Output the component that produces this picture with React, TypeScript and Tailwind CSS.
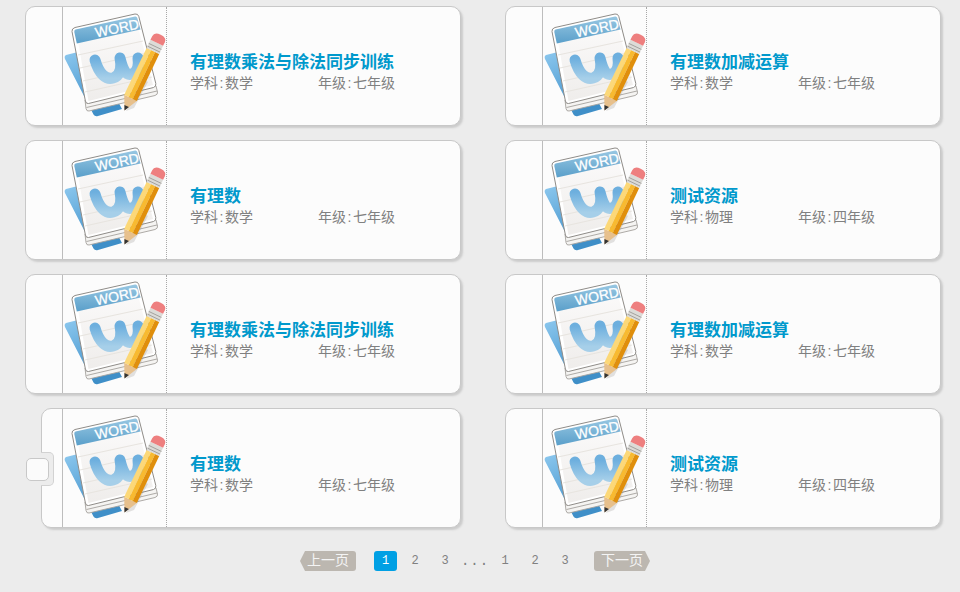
import React from 'react'

interface Resource {
  title: string
  subject: string
  grade: string
}

const resources: Resource[] = [
  { title: '有理数乘法与除法同步训练', subject: '数学', grade: '七年级' },
  { title: '有理数加减运算', subject: '数学', grade: '七年级' },
  { title: '有理数', subject: '数学', grade: '七年级' },
  { title: '测试资源', subject: '物理', grade: '四年级' },
  { title: '有理数乘法与除法同步训练', subject: '数学', grade: '七年级' },
  { title: '有理数加减运算', subject: '数学', grade: '七年级' },
  { title: '有理数', subject: '数学', grade: '七年级' },
  { title: '测试资源', subject: '物理', grade: '四年级' },
]

const WordIcon = () => (
  <svg width="103" height="112" viewBox="3 0 103 112" className="block overflow-visible">
    <defs>
      <linearGradient id="backSheet" x1="0" y1="0" x2="0.4" y2="1">
        <stop offset="0" stopColor="#8fcaf0" />
        <stop offset="1" stopColor="#3f8fc8" />
      </linearGradient>
      <linearGradient id="band" x1="0" y1="0" x2="0" y2="1">
        <stop offset="0" stopColor="#98c7e2" />
        <stop offset="1" stopColor="#5a9fca" />
      </linearGradient>
      <linearGradient id="sheet" x1="0" y1="0" x2="0" y2="1">
        <stop offset="0" stopColor="#fcfbfb" />
        <stop offset="1" stopColor="#efedeb" />
      </linearGradient>
      <linearGradient id="logo" x1="0" y1="0" x2="0" y2="1">
        <stop offset="0" stopColor="#6dafde" />
        <stop offset="1" stopColor="#a6cfe9" />
      </linearGradient>
    </defs>
    <path d="M6 47 L30 41 L62 101 L38 108 Q35 109 33.500 106.500 L5 51 Q4 48 6 47 Z" fill="url(#backSheet)" />
    <path d="M29 103 L95 87.500 Q98 86.500 97.500 84 L96 78 L25 92 L26 100.500 Q26.500 103.500 29 103 Z" fill="#f5f4f2" stroke="#a5a29d" strokeWidth="0.9" />
    <path d="M26.500 99.500 L97 83" stroke="#a5a29d" strokeWidth="0.9" fill="none" />
    <path
      d="M15 19.500 L75 6 Q78 5.500 78.800 8.500 L95.800 75.500 Q96.400 78.500 93.500 79.500 L28.500 95.500 Q26 96 25.400 93 L12 23.500 Q11.600 20.500 15 19.500 Z"
      fill="#ffffff"
      stroke="#8f8c88"
      strokeWidth="1"
    />
    <path d="M16 22 L75.500 9 L93 77 L28.500 93 Z" fill="url(#sheet)" />
    <path d="M15.500 21.500 L75 8.500 Q76.800 8 77.300 10 L80.500 21.500 L16.800 35.500 L14.300 24 Q14 22 15.500 21.500 Z" fill="url(#band)" />
    <g stroke="#e7e4df" strokeWidth="1.200">
      <line x1="18" y1="47" x2="83" y2="33" />
      <line x1="20" y1="60" x2="87" y2="45" />
      <line x1="23" y1="73" x2="90" y2="58" />
      <line x1="25" y1="84" x2="92" y2="69" />
    </g>
    <text
      x="57"
      y="25"
      textAnchor="middle"
      fill="#ffffff"
      stroke="#ffffff"
      strokeWidth="0.25"
      fontSize="14"
      transform="rotate(-12 57 20)"
      className="font-['Liberation_Sans',sans-serif]"
    >
      WORD
    </text>
    <path
      d="M35 52 C39 66 46 72 53 70 C60 68 62 60 60 50 C63 62 66 68 72 66 C77 64 79 58 78 50"
      fill="none"
      stroke="url(#logo)"
      strokeWidth="11"
      strokeLinecap="round"
      strokeLinejoin="round"
    />
    <path d="M66 103 L82 70 L88 74 L74 100 Z" fill="#77746f" opacity="0.2" />
    <g transform="translate(64.500 102.500) rotate(25.500)">
      <path d="M0 0 L-7 -14 L7 -14 Z" fill="#e7c08c" />
      <path d="M0 0 L-2.500 -5 L2.500 -5 Z" fill="#333333" />
      <rect x="-7" y="-66" width="5" height="52" fill="#fcd878" />
      <rect x="-2" y="-66" width="4.500" height="52" fill="#f8ba30" />
      <rect x="2.500" y="-66" width="4.500" height="52" fill="#e08f0c" />
      <rect x="-7" y="-75" width="14" height="9" fill="#dcdbd7" />
      <g stroke="#9b9a96" strokeWidth="0.8">
        <line x1="-7" y1="-68" x2="7" y2="-68" />
        <line x1="-7" y1="-71" x2="7" y2="-71" />
      </g>
      <path d="M-7 -75 L-7 -79 Q-7 -84 0 -84 Q7 -84 7 -79 L7 -75 Z" fill="#ee7f7f" />
    </g>
  </svg>
)

const Meta = ({ label, value, className }: { label: string; value: string; className?: string }) => (
  <span className={className}>
    {label}
    <span className="inline-block w-[7px] text-center">:</span>
    {value}
  </span>
)

const ResourceCard = ({ item, selecting }: { item: Resource; selecting?: boolean }) => (
  <div className={`relative flex h-[120px] rounded-[10px] border border-[#c8c8c8] bg-[#fcfcfc] shadow-[2px_2px_2px_#cccccc] ${selecting ? 'ml-4 w-[420px]' : 'w-[436px]'}`}>
    {selecting && (
      <>
        <div className="absolute left-[-1px] top-[43px] h-[34px] w-[13px] rounded-r-[5px] border border-l-0 border-[#d2d2d2] bg-[#ececec]" />
        <div className="absolute left-[-16px] top-[49px] h-[23px] w-[23px] rounded-[5px] border border-[#c8c8c8] bg-[#fbfbfb]" />
      </>
    )}
    <div className={`h-full shrink-0 border-r border-[#bdbdbd] ${selecting ? 'w-[21px]' : 'w-[37px]'}`} />
    <div className="h-full w-[104px] shrink-0 border-r border-dotted border-[#a8a8a8] pt-px">
      <WordIcon />
    </div>
    <div className="flex flex-col pl-[23px] pt-[46px]">
      <div className="text-[17px] font-bold leading-5 text-[#0099cc]">{item.title}</div>
      <div className="flex text-[14px] leading-[20px] text-[#808080]">
        <Meta label="学科" value={item.subject} className="w-[128px]" />
        <Meta label="年级" value={item.grade} />
      </div>
    </div>
  </div>
)

const pagerButton =
  'flex h-5 w-14 items-center justify-center bg-[#bcb7b0] text-[14px] text-[#f4f4f4]'

const Pager = () => (
  <div className="mt-[23px] flex h-5 items-center pl-[300px] font-['Liberation_Mono','Noto_Sans_CJK_SC',monospace] text-[12px] text-[#808080]">
    <div className={`${pagerButton} rounded-r-[3px] [clip-path:polygon(5px_0,100%_0,100%_100%,5px_100%,0_50%)]`}>上一页</div>
    <div className="ml-[18px] mr-[3px] flex h-5 w-[23px] items-center justify-center rounded-[3px] bg-[#00a0e4] text-white">1</div>
    <span className="w-[30px] text-center">2</span>
    <span className="w-[30px] text-center">3</span>
    <span className="w-[30px] text-center text-[14px] tracking-[1px]">...</span>
    <span className="w-[30px] text-center">1</span>
    <span className="w-[30px] text-center">2</span>
    <span className="w-[30px] text-center">3</span>
    <div className={`${pagerButton} ml-[14px] rounded-l-[3px] [clip-path:polygon(0_0,calc(100%-5px)_0,100%_50%,calc(100%-5px)_100%,0_100%)]`}>下一页</div>
  </div>
)

export default function App() {
  return (
    <div className="h-[592px] w-[960px] overflow-hidden bg-[#ececec] pt-[6px] font-['Liberation_Sans','Noto_Sans_CJK_SC',sans-serif]">
      <div className="grid w-[916px] translate-x-[25px] grid-cols-[436px_436px] gap-x-[44px] gap-y-[14px]">
        {resources.map((item, i) => (
          <ResourceCard key={i} item={item} selecting={i === 6} />
        ))}
      </div>
      <Pager />
    </div>
  )
}
